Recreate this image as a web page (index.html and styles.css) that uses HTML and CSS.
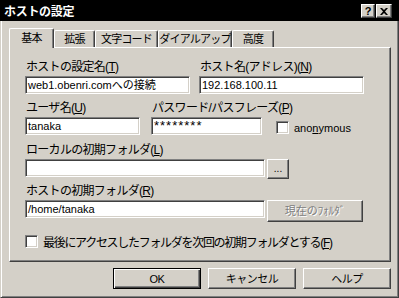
FILE: index.html
```html
<!DOCTYPE html>
<html lang="ja">
<head>
    <meta charset="UTF-8">
    <title>ホストの設定</title>
    <link rel="stylesheet" href="styles.css">
</head>
<body>
    <div class="window">

        <div class="titlebar">
            <span class="title">ホストの設定</span>
            <div class="caption-btns">
                <span class="cbtn">?</span>
                <span class="cbtn">
                    <svg width="8" height="7" viewBox="0 0 8 7"><path d="M0 0h2l2 2 2-2h2L5 3.5 8 7H6L4 5 2 7H0l3-3.5z" fill="#000"/></svg>
                </span>
            </div>
        </div>

        <div class="client">
            <div class="tabs">
                <div class="tab tab-basic active">基本</div>
                <div class="tab tab-ext">拡張</div>
                <div class="tab tab-code">文字コード</div>
                <div class="tab tab-dial">ダイアルアップ</div>
                <div class="tab tab-adv">高度</div>
            </div>

            <div class="panel">
                <div class="row">
                    <div class="field w-name">
                        <label>ホストの設定名(<u>T</u>)</label>
                        <div class="edit">web1.obenri.comへの接続</div>
                    </div>
                    <div class="field w-name">
                        <label>ホスト名(アドレス)(<u>N</u>)</label>
                        <div class="edit">192.168.100.11</div>
                    </div>
                </div>

                <div class="row row-user">
                    <div class="field w-user">
                        <label>ユーザ名(<u>U</u>)</label>
                        <div class="edit">tanaka</div>
                    </div>
                    <div class="field w-pass">
                        <label>パスワード/パスフレーズ(<u>P</u>)</label>
                        <div class="edit password">********</div>
                    </div>
                    <div class="check-item anon">
                        <span class="checkbox"></span>
                        <span>ano<u>n</u>ymous</span>
                    </div>
                </div>

                <div class="row row-local">
                    <div class="field">
                        <label>ローカルの初期フォルダ(<u>L</u>)</label>
                        <div class="combo">
                            <div class="edit w-folder"></div>
                            <button class="btn btn-browse">...</button>
                        </div>
                    </div>
                </div>

                <div class="row row-host">
                    <div class="field">
                        <label>ホストの初期フォルダ(<u>R</u>)</label>
                        <div class="combo">
                            <div class="edit w-folder">/home/tanaka</div>
                            <button class="btn btn-current" disabled>現在のﾌｫﾙﾀﾞ</button>
                        </div>
                    </div>
                </div>

                <div class="check-item last-folder">
                    <span class="checkbox"></span>
                    <span>最後にアクセスしたフォルダを次回の初期フォルダとする(<u>F</u>)</span>
                </div>
            </div>

            <div class="dialog-buttons">
                <button class="btn btn-dialog default">OK</button>
                <button class="btn btn-dialog">キャンセル</button>
                <button class="btn btn-dialog">ヘルプ</button>
            </div>
        </div>

    </div>
</body>
</html>
```
FILE: styles.css
```css
body {
    margin: 0;
    background-color: #d4d0c8;
    font-family: "Liberation Sans", "Noto Sans CJK JP", sans-serif;
    font-size: 12px;
    color: #000;
}

.window {
    width: 399px;
    height: 298px;
    display: flex;
    flex-direction: column;
}

/* title bar */
.titlebar {
    height: 21px;
    flex-shrink: 0;
    background-color: #000;
    display: flex;
    align-items: center;
    justify-content: space-between;
    padding: 0 7px 0 4px;
}

.title {
    color: #fff;
    font-family: "Noto Sans CJK JP", sans-serif;
    font-weight: 700;
    font-size: 12px;
    letter-spacing: -0.3px;
    line-height: 16px;
}

.caption-btns {
    display: flex;
    gap: 1px;
    margin-top: 1px;
}

.cbtn {
    width: 14px;
    height: 14px;
    box-sizing: border-box;
    background-color: #d4d0c8;
    border: 1px solid;
    border-color: #fff #404040 #404040 #fff;
    box-shadow: inset -1px -1px #808080;
    display: flex;
    align-items: center;
    justify-content: center;
    font-family: "Liberation Sans", sans-serif;
    font-weight: 700;
    font-size: 11px;
    line-height: 12px;
}

.cbtn + .cbtn {
    width: 16px;
}

/* client area */
.client {
    flex: 1;
    border: 1px solid;
    border-top: none;
    border-color: #d4d0c8 #404040 #404040 #d4d0c8;
    box-shadow: inset 1px 0 #fff, inset -1px -1px #808080;
    padding: 7px 7px 0 8px;
}

.tabs {
    display: flex;
    align-items: flex-end;
    height: 19px;
}

.tab {
    height: 17px;
    box-sizing: border-box;
    border-top: 1px solid #fff;
    border-left: 1px solid #fff;
    border-right: 1px solid #404040;
    box-shadow: inset -1px 0 #808080;
    border-radius: 2px 2px 0 0;
    text-align: center;
    line-height: 15px;
    font-family: "Noto Sans CJK JP", sans-serif;
    font-size: 11px;
    letter-spacing: -0.8px;
    white-space: nowrap;
}

.tab.active {
    height: 20px;
    position: relative;
    z-index: 1;
    margin-bottom: -1px;
    background-color: #d4d0c8;
    line-height: 16px;
}

.tab-basic { width: 45px; }
.tab-ext { width: 41px; }
.tab-code { width: 63px; }
.tab-dial { width: 74px; }
.tab-adv { width: 42px; }

.panel {
    height: 215px;
    box-sizing: border-box;
    border: 1px solid;
    border-color: #fff #404040 #404040 #fff;
    box-shadow: inset -1px -1px #808080;
    padding: 11px 0 0 15px;
}

.row {
    display: flex;
    align-items: flex-end;
    gap: 9px;
}

.row-user {
    margin-top: 6px;
    gap: 11px;
}

.row-local {
    margin-top: 7px;
}

.row-host {
    margin-top: 4px;
}

.field label {
    display: block;
    height: 16px;
    line-height: 16px;
    margin-bottom: 1px;
    padding-left: 1px;
    letter-spacing: -0.7px;
    white-space: nowrap;
}

.edit {
    height: 18px;
    box-sizing: border-box;
    background-color: #fff;
    border: 1px solid;
    border-color: #808080 #fff #fff #808080;
    box-shadow: inset 1px 1px #404040, inset -1px -1px #d4d0c8;
    padding: 0 2px;
    font-size: 11px;
    line-height: 16px;
    white-space: nowrap;
    overflow: hidden;
}

.edit.password {
    font-size: 13px;
    letter-spacing: 1px;
}

.w-name { width: 165px; }
.w-user { width: 115px; }
.w-pass { width: 111px; }
.w-folder { width: 240px; }

.combo {
    display: flex;
    align-items: flex-start;
    gap: 2px;
}

.check-item {
    display: flex;
    align-items: center;
    gap: 5px;
    white-space: nowrap;
}

.anon {
    margin-left: 3px;
    margin-bottom: 1px;
    font-size: 11px;
}

.last-folder {
    margin-top: 11px;
    letter-spacing: -1.3px;
}

.checkbox {
    width: 13px;
    height: 13px;
    box-sizing: border-box;
    background-color: #fff;
    border: 1px solid;
    border-color: #808080 #fff #fff #808080;
    box-shadow: inset 1px 1px #404040, inset -1px -1px #d4d0c8;
}

/* buttons */
.btn {
    box-sizing: border-box;
    background-color: #d4d0c8;
    border: 1px solid;
    border-color: #fff #404040 #404040 #fff;
    box-shadow: inset -1px -1px #808080;
    font-family: "Liberation Sans", "Noto Sans CJK JP", sans-serif;
    font-size: 11px;
    color: #000;
    padding: 0;
    line-height: 16px;
}

.btn-browse {
    width: 22px;
    height: 20px;
    font-size: 10px;
}

.btn-current {
    width: 96px;
    height: 22px;
    color: #808080;
    text-shadow: 1px 1px #fff;
}

.dialog-buttons {
    display: flex;
    justify-content: flex-end;
    gap: 7px;
    margin-top: 6px;
}

.btn-dialog {
    width: 88px;
    height: 21px;
    letter-spacing: -0.5px;
}

.btn-dialog.default {
    border-color: #000;
    box-shadow: inset 1px 1px #fff, inset -1px -1px #404040, inset -2px -2px #808080;
}
```
